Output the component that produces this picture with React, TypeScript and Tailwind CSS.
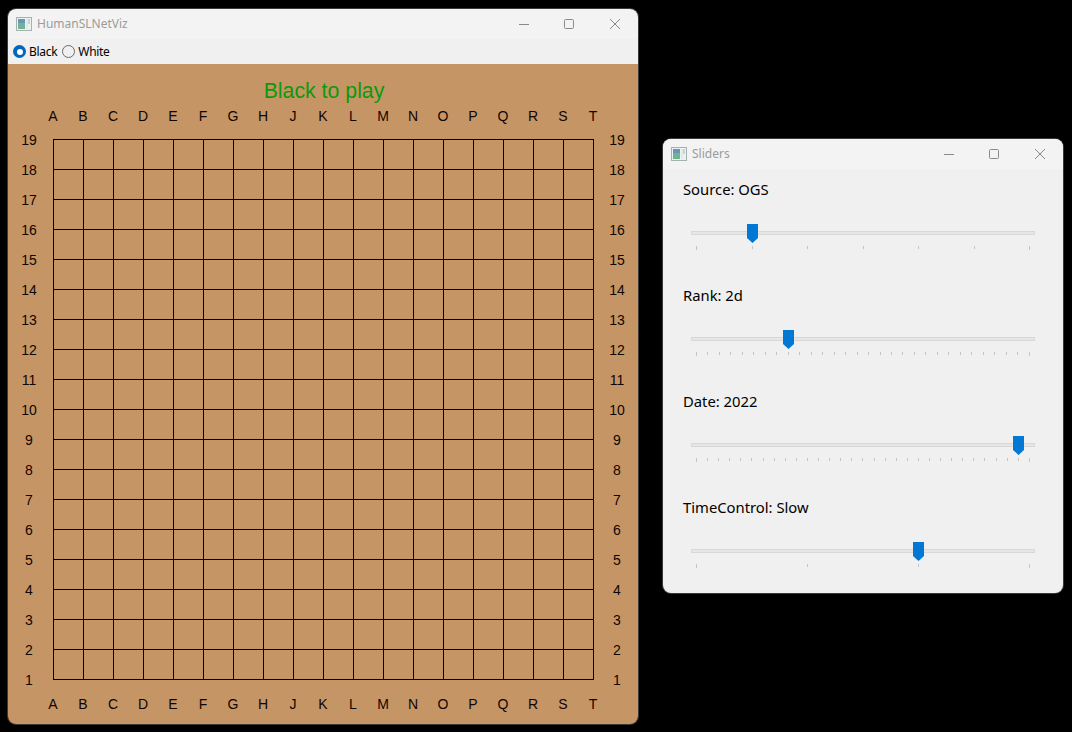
const colLabels = "ABCDEFGHJKLMNOPQRST".split("");
const rowLabels = Array.from({ length: 19 }, (_, i) => 19 - i);

const sliders = [
  { label: "Source: OGS", intervals: 6, value: 1 },
  { label: "Rank: 2d", intervals: 29, value: 8 },
  { label: "Date: 2022", intervals: 30, value: 29 },
  { label: "TimeControl: Slow", intervals: 3, value: 2 },
];

function AppIcon() {
  return (
    <svg width="16" height="14" viewBox="0 0 16 14" className="shrink-0">
      <rect x="0.5" y="0.5" width="15" height="13" fill="#eef1f1" stroke="#a9b0b0" />
      <rect x="2" y="2" width="7" height="10" fill="#6fb0ac" />
      <rect x="2" y="2" width="7" height="4" fill="#6a97ad" />
      <rect x="2" y="9" width="7" height="3" fill="#6db58a" />
      <rect x="10" y="2" width="2" height="10" fill="#e3e9e9" />
      <rect x="12" y="2" width="2" height="5" fill="#c3d6d6" />
    </svg>
  );
}

function TitleBar({ title }: { title: string }) {
  return (
    <div className="flex h-[30px] items-center bg-[#f3f3f3]">
      <div className="ml-2 flex flex-1 items-center gap-[5px]">
        <AppIcon />
        <span className="text-[12px] text-[#9b9b9b]">{title}</span>
      </div>
      <div className="flex h-full w-[44px] items-center justify-center">
        <svg width="10" height="10" viewBox="0 0 10 10">
          <path d="M0 5.5H10" stroke="#8a8a8a" fill="none" />
        </svg>
      </div>
      <div className="flex h-full w-[46px] items-center justify-center">
        <svg width="10" height="10" viewBox="0 0 10 10">
          <rect x="0.5" y="0.5" width="9" height="9" rx="1" stroke="#8a8a8a" fill="none" />
        </svg>
      </div>
      <div className="flex h-full w-[46px] items-center justify-center">
        <svg width="10" height="10" viewBox="0 0 10 10">
          <path d="M0 0L10 10M10 0L0 10" stroke="#8a8a8a" fill="none" />
        </svg>
      </div>
    </div>
  );
}

function Radio({ label, checked }: { label: string; checked?: boolean }) {
  return (
    <div className="flex items-center gap-[3px]">
      {checked ? (
        <div className="flex size-[13px] items-center justify-center rounded-full bg-[#0067c0]">
          <div className="size-[6px] rounded-full bg-white" />
        </div>
      ) : (
        <div className="size-[13px] rounded-full border border-[#6a6a6a]" />
      )}
      <span className="text-[12px] tracking-[-0.3px] text-black">{label}</span>
    </div>
  );
}

function BoardGrid() {
  const lines = Array.from({ length: 19 }, (_, i) => i * 30 + 0.5);
  return (
    <svg width="541" height="541" viewBox="0 0 541 541" className="mt-[14px] mb-[15px] ml-[3px] mr-[2px] shrink-0" shapeRendering="crispEdges">
      {lines.map((p) => (
        <g key={p} stroke="#000" strokeWidth="1">
          <line x1={p} y1="0" x2={p} y2="541" />
          <line x1="0" y1={p} x2="541" y2={p} />
        </g>
      ))}
    </svg>
  );
}

function ColLabels() {
  return (
    <div className="ml-[30px] flex h-[18px] items-center">
      {colLabels.map((c) => (
        <span key={c} className="w-[30px] text-center">
          {c}
        </span>
      ))}
    </div>
  );
}

function RowLabels() {
  return (
    <div className="flex w-[42px] shrink-0 flex-col">
      {rowLabels.map((n) => (
        <span key={n} className="flex h-[30px] items-center justify-center">
          {n}
        </span>
      ))}
    </div>
  );
}

function Slider({ label, intervals, value }: { label: string; intervals: number; value: number }) {
  const ticks = Array.from({ length: intervals + 1 }, (_, i) => i);
  return (
    <div className="h-[106px]">
      <div className="h-[22px] text-[14.8px] leading-[20px] text-black">{label}</div>
      <div className="relative mt-[30px] ml-[8px] w-[344px]">
        <div className="mt-[9px] h-[4px] border border-[#d6d9d8] bg-[#e6e6e6]" />
        <svg
          width="11"
          height="19"
          viewBox="0 0 11 19"
          className="absolute top-[-7px]"
          style={{ left: 5 + (333 * value) / intervals - 5.5 + 0.5 }}
        >
          <path d="M0 0H11V14L5.5 19L0 14Z" fill="#0078d4" />
        </svg>
        <div className="mx-[5px] mt-[11px] flex justify-between">
          {ticks.map((t) => (
            <div
              key={t}
              className={t === 0 || t === intervals ? "h-[4px] w-px bg-[#c4c4c4]" : "h-[3px] w-px bg-[#c4c4c4]"}
            />
          ))}
        </div>
      </div>
    </div>
  );
}

export default function App() {
  return (
    <div className="relative h-[732px] w-[1072px] overflow-hidden bg-black font-['Noto_Sans',sans-serif]">
      <div className="absolute left-[8px] top-[9px] h-[715px] w-[630px] overflow-hidden rounded-[8px] shadow-[0_0_0_1px_#3a3a3a]">
        <TitleBar title="HumanSLNetViz" />
        <div className="flex h-[25px] items-center gap-[5px] bg-[#f0f0f0] pl-[5px]">
          <Radio label="Black" checked />
          <Radio label="White" />
        </div>
        <div className="h-[660px] bg-[#c69565] font-['Liberation_Sans',sans-serif] text-[14px] text-[#100500]">
          <div className="pt-[15px] pl-[2px] text-center text-[21.3px] leading-[24px] text-[#0c9a0c]">Black to play</div>
          <div className="mt-[4px]">
            <ColLabels />
          </div>
          <div className="flex">
            <RowLabels />
            <BoardGrid />
            <RowLabels />
          </div>
          <ColLabels />
        </div>
      </div>

      <div className="absolute left-[663px] top-[139px] h-[454px] w-[400px] overflow-hidden rounded-[8px] bg-[#f0f0f0] shadow-[0_0_0_1px_#3a3a3a]">
        <TitleBar title="Sliders" />
        <div className="pl-[20px] pr-[21px] pt-[10px]">
          {sliders.map((s) => (
            <Slider key={s.label} {...s} />
          ))}
        </div>
      </div>
    </div>
  );
}
